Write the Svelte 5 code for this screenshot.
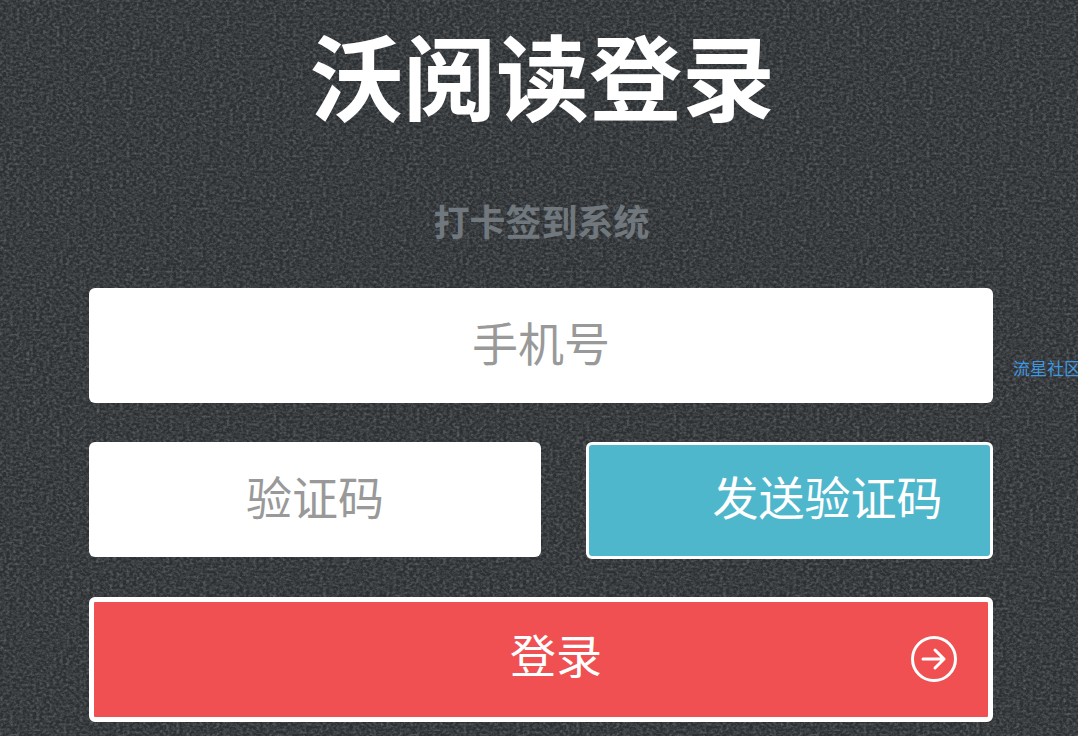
<script>
    let phone = $state("");
    let code = $state("");

    // woven grain for the page background, svg so no raster is needed
    const grain = `<svg xmlns='http://www.w3.org/2000/svg' width='400' height='400'><filter id='n' x='0' y='0' width='100%' height='100%'><feTurbulence type='fractalNoise' baseFrequency='0.3 0.38' numOctaves='3' seed='7' stitchTiles='stitch'/><feColorMatrix values='0 0 0 0 0.5  0 0 0 0 0.52  0 0 0 0 0.53  0.45 0.45 0 0 -0.36'/></filter><rect width='400' height='400' fill='%232c3033'/><rect width='400' height='400' filter='url(%23n)'/></svg>`;
    const grainUrl = `url("data:image/svg+xml,${grain.replace(/</g, "%3C").replace(/>/g, "%3E")}")`;
</script>

<div class="page" style:background-image={grainUrl}>
    <main class="login">
        <h1>沃阅读登录</h1>
        <h2>打卡签到系统</h2>

        <form class="fields" onsubmit={(e) => e.preventDefault()}>
            <input type="text" placeholder="手机号" bind:value={phone} />

            <div class="code-row">
                <input type="text" placeholder="验证码" bind:value={code} />
                <button type="button" class="send">发送验证码</button>
            </div>

            <button type="submit" class="submit">
                <span>登录</span>
                <svg class="arrow" viewBox="0 0 46 46" fill="none" stroke="currentColor" stroke-width="3" stroke-linecap="round" stroke-linejoin="round" aria-hidden="true">
                    <circle cx="23" cy="23" r="21.5" />
                    <path d="M12 23H33M24 14l9 9-9 9" />
                </svg>
            </button>
        </form>
    </main>

    <a class="side-link" href="#top">流星社区</a>
</div>

<style>
    :global(body) {
        margin: 0;
        overflow: hidden;
    }

    .page {
        display: flex;
        align-items: flex-start;
        gap: 20px;
        height: 736px;
        padding-left: 89px;
        overflow: hidden;
        background-color: #2c3033;
        font-family: "Noto Sans CJK SC", "Liberation Sans", sans-serif;
    }

    .login {
        flex: none;
        width: 904px;
    }

    h1 {
        margin: 0;
        padding: 8px 0 0 3px;
        color: #fff;
        font-size: 93px;
        font-weight: 700;
        line-height: 132px;
        text-align: center;
    }

    h2 {
        margin: 0;
        padding: 55px 0 0 1px;
        color: #70787e;
        font-size: 36px;
        font-weight: 700;
        line-height: 50px;
        text-align: center;
    }

    .fields {
        display: flex;
        flex-direction: column;
        gap: 39px;
        margin-top: 43px;
    }

    input {
        box-sizing: border-box;
        width: 100%;
        height: 115px;
        border: none;
        border-radius: 6px;
        padding: 0 0 10px;
        background: #fff;
        color: #333;
        font-family: inherit;
        font-size: 46px;
        text-align: center;
        outline: none;
    }

    input::placeholder {
        color: #999;
        opacity: 1;
    }

    .code-row {
        display: flex;
        gap: 45px;
    }

    .code-row input {
        flex: none;
        width: 452px;
    }

    button {
        box-sizing: border-box;
        border-style: solid;
        border-color: #fff;
        border-radius: 6px;
        color: #fff;
        font-family: inherit;
        font-size: 46px;
        cursor: pointer;
    }

    .send {
        flex: none;
        width: 407px;
        height: 117px;
        margin-bottom: -2px;
        border-width: 3px;
        padding: 0 0 11px 76px;
        background: #4fb7cc;
    }

    .submit {
        position: relative;
        width: 904px;
        height: 125px;
        margin-top: 1px;
        border-width: 5px;
        padding: 0 0 13px 30px;
        background: #f05051;
    }

    .arrow {
        position: absolute;
        top: 34px;
        right: 31px;
        width: 46px;
        height: 46px;
    }

    .side-link {
        flex: none;
        margin-top: 356px;
        color: #3f97e0;
        font-size: 17px;
        line-height: 23px;
        text-decoration: none;
        white-space: nowrap;
    }
</style>
